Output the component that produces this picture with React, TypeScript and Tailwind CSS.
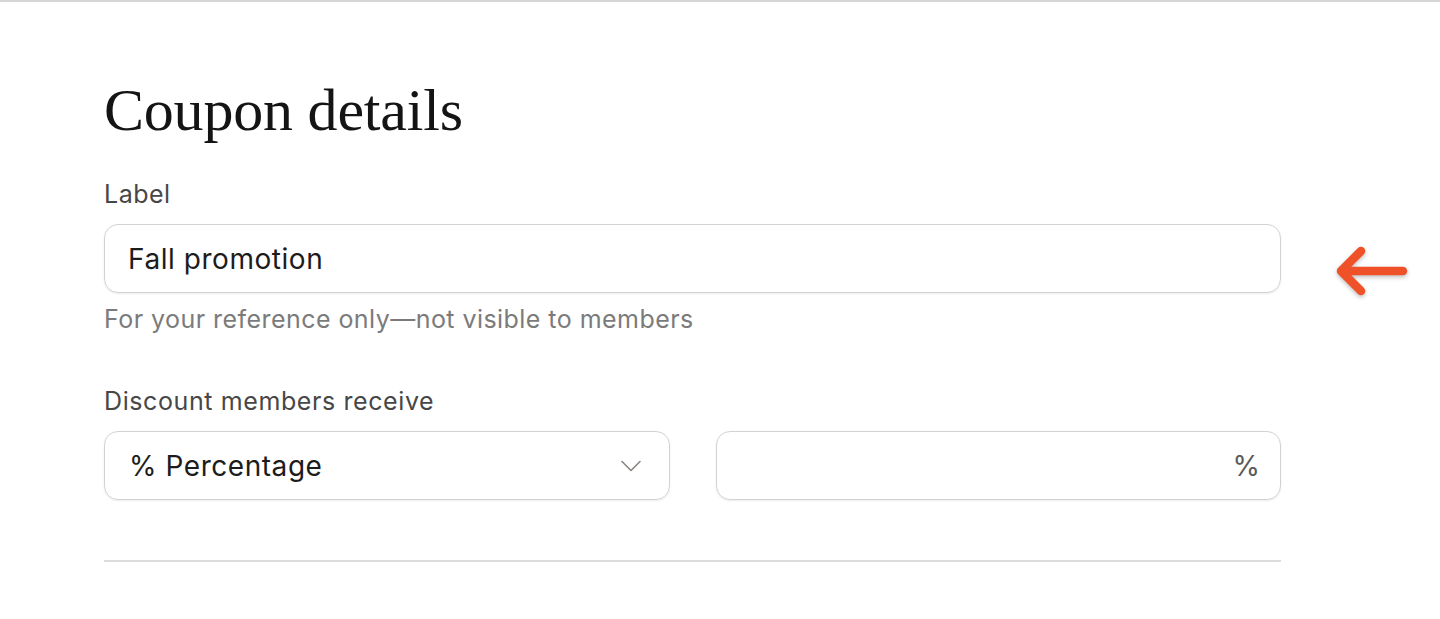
export default function App() {
  return (
    <div className="min-h-[619px] w-full bg-white border-t-2 border-[#d6d6d6] font-['Inter',sans-serif]">
      <div className="flex items-start">
        {/* form column */}
        <div className="ml-[104px] w-[1177px] pt-[72px]">
          <h1 className="font-['Liberation_Serif',serif] text-[60px] leading-[72px] text-[#141414] tracking-[-0.2px]">
            Coupon details
          </h1>

          <div className="mt-[33px]">
            <label className="block text-[25px] leading-[30px] tracking-[0.5px] text-[#474747]">Label</label>
            <div className="mt-[15px] h-[69px] flex items-center px-[23px] rounded-[14px] border border-[#d2d2d2] shadow-[0_1px_2px_rgba(0,0,0,0.08)]">
              <span className="text-[28px] tracking-[0.55px] text-[#1c1c1c]">Fall promotion</span>
            </div>
            <p className="mt-[11px] text-[25px] leading-[30px] tracking-[0.45px] text-[#7b7b7b]">
              For your reference only—not visible to members
            </p>
          </div>

          <div className="mt-[52px]">
            <label className="block text-[25px] leading-[30px] tracking-[0.6px] text-[#474747]">
              Discount members receive
            </label>
            <div className="mt-[15px] grid grid-cols-2 gap-[46px]">
              <div className="h-[69px] flex items-center justify-between pl-[24px] pr-[28px] rounded-[14px] border border-[#d2d2d2] shadow-[0_1px_2px_rgba(0,0,0,0.08)]">
                <span className="text-[28px] tracking-[0.55px] text-[#1c1c1c]">% Percentage</span>
                <svg width="20" height="12" viewBox="0 0 20 12" fill="none">
                  <path d="M1 1.5 L10 10.5 L19 1.5" stroke="#8a8583" strokeWidth="1.6" strokeLinecap="round" strokeLinejoin="round" />
                </svg>
              </div>
              <div className="h-[69px] flex items-center justify-end pr-[20px] rounded-[14px] border border-[#d2d2d2] shadow-[0_1px_2px_rgba(0,0,0,0.08)]">
                <span className="text-[28px] text-[#5a5a5a]">%</span>
              </div>
            </div>
          </div>

          <div className="mt-[60px] border-t-2 border-[#dcdcdc]" />
        </div>

        {/* callout arrow */}
        <div className="ml-[52px] mt-[243px]">
          <svg width="76" height="56" viewBox="0 0 76 56" className="drop-shadow-[0_2px_2px_rgba(0,0,0,0.25)]">
            <path
              d="M70 26 H8 M28 6 L8 26 L28 46"
              fill="none"
              stroke="#ef5128"
              strokeWidth="8.5"
              strokeLinecap="round"
              strokeLinejoin="round"
            />
          </svg>
        </div>
      </div>
    </div>
  );
}
